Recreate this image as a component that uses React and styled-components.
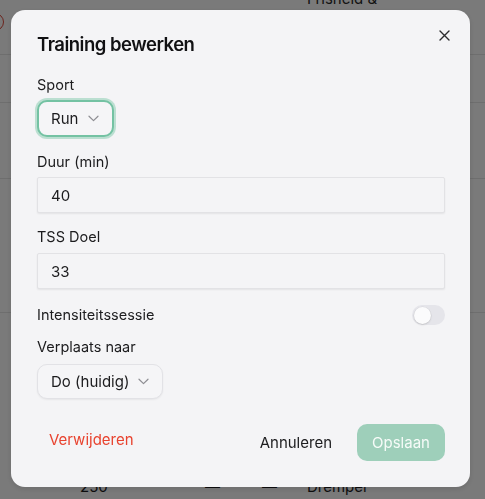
import React from "react";
import styled, { createGlobalStyle } from "styled-components";

const Global = createGlobalStyle`
  html, body { margin: 0; padding: 0; }
  body {
    background: #ffffff;
    font-family: Inter, "Noto Sans", "Liberation Sans", sans-serif;
    color: #1c1c1e;
    overflow: hidden;
  }
`;

/* ---------- page behind the dialog ---------- */

const Page = styled.div`
  width: 485px;
  height: 499px;
  overflow: hidden;
  display: flex;
  flex-direction: column;
  background: #ffffff;
`;

const Row = styled.div`
  position: relative;
  height: ${(p) => p.$h}px;
  flex-shrink: 0;
  border-bottom: 1px solid #e6e6e6;
  box-sizing: border-box;
`;

const TableRow = styled.div`
  display: flex;
  align-items: flex-end;
  height: ${(p) => p.$h}px;
  flex-shrink: 0;
  font-size: 15px;
  color: #1c1c1e;
  box-sizing: border-box;
`;

const Cell = styled.span`
  width: ${(p) => p.$w}px;
  flex-shrink: 0;
  line-height: 18px;
`;

const HeaderText = styled.span`
  position: absolute;
  left: 307px;
  top: -10px;
  font-size: 15px;
  line-height: 18px;
  color: #2a2a2a;
`;

const Badge = styled.span`
  position: absolute;
  left: -14px;
  top: 13px;
  width: 16px;
  height: 16px;
  border-radius: 50%;
  border: 1.5px solid #e04a3c;
`;

/* ---------- dialog ---------- */

const Backdrop = styled.div`
  position: fixed;
  inset: 0;
  background: rgba(0, 0, 0, 0.52);
  padding: 10px 0 0 11px;
  box-sizing: border-box;
`;

const Dialog = styled.div`
  width: 459px;
  height: 477px;
  box-sizing: border-box;
  background: #f4f4f6;
  border-radius: 14px;
  box-shadow: 0 2px 6px rgba(0, 0, 0, 0.12);
  padding: 23px 25px 0 26px;
  display: flex;
  flex-direction: column;
  position: relative;
`;

const Title = styled.h2`
  margin: 0;
  font-size: 18.5px;
  font-weight: 600;
  line-height: 22px;
  letter-spacing: -0.5px;
  color: #111113;
`;

const CloseButton = styled.button`
  position: absolute;
  top: 15px;
  right: 16px;
  width: 20px;
  height: 20px;
  padding: 0;
  border: none;
  background: none;
  display: flex;
  align-items: center;
  justify-content: center;
  color: #2c2c2e;
`;

const Field = styled.div`
  display: flex;
  flex-direction: column;
  align-items: flex-start;
  margin-top: ${(p) => p.$mt}px;
`;

const Label = styled.label`
  font-size: 14.5px;
  line-height: 18px;
  color: #1c1c1e;
  margin-bottom: ${(p) => p.$mb ?? 6}px;
`;

const SelectButton = styled.button`
  display: flex;
  align-items: center;
  gap: ${(p) => (p.$focused ? 10 : 9)}px;
  height: ${(p) => (p.$focused ? 37 : 35)}px;
  box-sizing: border-box;
  padding: 0 13px 0 ${(p) => (p.$focused ? 12 : 13)}px;
  font-family: inherit;
  font-size: 15px;
  color: #1c1c1e;
  background: #f5f5f7;
  border-radius: 10px;
  border: ${(p) => (p.$focused ? "2px solid #74c2a3" : "1px solid #e2e2e6")};
  box-shadow: ${(p) =>
    p.$focused
      ? "0 0 0 2px rgba(140, 205, 178, 0.55)"
      : "0 1px 2px rgba(0, 0, 0, 0.06)"};
`;

const TextInput = styled.input`
  width: 100%;
  height: 36px;
  box-sizing: border-box;
  padding: 0 13px;
  font-family: inherit;
  font-size: 15px;
  color: #1c1c1e;
  background: #f4f4f6;
  border: 1px solid #e2e2e5;
  border-radius: 2px;
  box-shadow: 0 1px 2px rgba(0, 0, 0, 0.07);
  outline: none;
`;

const ToggleRow = styled.div`
  display: flex;
  align-items: center;
  justify-content: space-between;
  margin-top: 16px;
  font-size: 14.5px;
  line-height: 18px;
`;

const Switch = styled.span`
  width: 33px;
  height: 20px;
  border-radius: 10px;
  background: #e5e5ea;
  display: flex;
  align-items: center;
  padding: 0 1.5px;
  box-sizing: border-box;
`;

const Knob = styled.span`
  width: 17px;
  height: 17px;
  border-radius: 50%;
  background: #fbfbfc;
  box-shadow: 0 0 0 0.5px rgba(0, 0, 0, 0.06), 0 1px 2px rgba(0, 0, 0, 0.12);
`;

const Footer = styled.div`
  display: flex;
  align-items: center;
  margin-top: 25px;
`;

const TextButton = styled.button`
  border: none;
  background: none;
  padding: 0 ${(p) => p.$px ?? 12}px;
  font-family: inherit;
  font-size: 15px;
  color: ${(p) => p.$color};
  height: 37px;
  margin-top: ${(p) => p.$mt ?? 0}px;
`;

const Spacer = styled.div`
  flex: 1;
`;

const PrimaryButton = styled.button`
  margin-left: 13px;
  width: 88px;
  height: 37px;
  border: none;
  border-radius: 10px;
  background: #9ecfba;
  color: #f6fbf8;
  font-family: inherit;
  font-size: 15px;
`;

const Chevron = () => (
  <svg width="11" height="7" viewBox="0 0 11 7" fill="none">
    <path d="M1 1.2 5.5 5.6 10 1.2" stroke="#8e8e93" strokeWidth="1.2" strokeLinecap="round" strokeLinejoin="round" />
  </svg>
);

export default function App() {
  return (
    <>
      <Global />
      <Page>
        <Row $h={55}>
          <Badge />
          <HeaderText>Frisheid &amp;</HeaderText>
        </Row>
        <Row $h={48} />
        <Row $h={76} />
        <Row $h={134} />
        <TableRow $h={183}>
          <Cell $w={80} />
          <Cell $w={125}>250</Cell>
          <Cell $w={57}>—</Cell>
          <Cell $w={45}>—</Cell>
          <Cell $w={100}>Drempel</Cell>
        </TableRow>
      </Page>

      <Backdrop>
        <Dialog role="dialog">
          <Title>Training bewerken</Title>
          <CloseButton aria-label="Sluiten">
            <svg width="11" height="11" viewBox="0 0 11 11">
              <path d="M1 1 10 10M10 1 1 10" stroke="#2c2c2e" strokeWidth="1.4" strokeLinecap="round" />
            </svg>
          </CloseButton>

          <Field $mt={21}>
            <Label>Sport</Label>
            <SelectButton $focused>
              Run <Chevron />
            </SelectButton>
          </Field>

          <Field $mt={16}>
            <Label>Duur (min)</Label>
            <TextInput defaultValue="40" />
          </Field>

          <Field $mt={15}>
            <Label $mb={7}>TSS Doel</Label>
            <TextInput defaultValue="33" />
          </Field>

          <ToggleRow>
            <span>Intensiteitssessie</span>
            <Switch>
              <Knob />
            </Switch>
          </ToggleRow>

          <Field $mt={13}>
            <Label $mb={8}>Verplaats naar</Label>
            <SelectButton>
              Do (huidig) <Chevron />
            </SelectButton>
          </Field>

          <Footer>
            <TextButton $color="#e8432f" $mt={-6}>Verwijderen</TextButton>
            <Spacer />
            <TextButton $color="#1c1c1e">Annuleren</TextButton>
            <PrimaryButton>Opslaan</PrimaryButton>
          </Footer>
        </Dialog>
      </Backdrop>
    </>
  );
}
